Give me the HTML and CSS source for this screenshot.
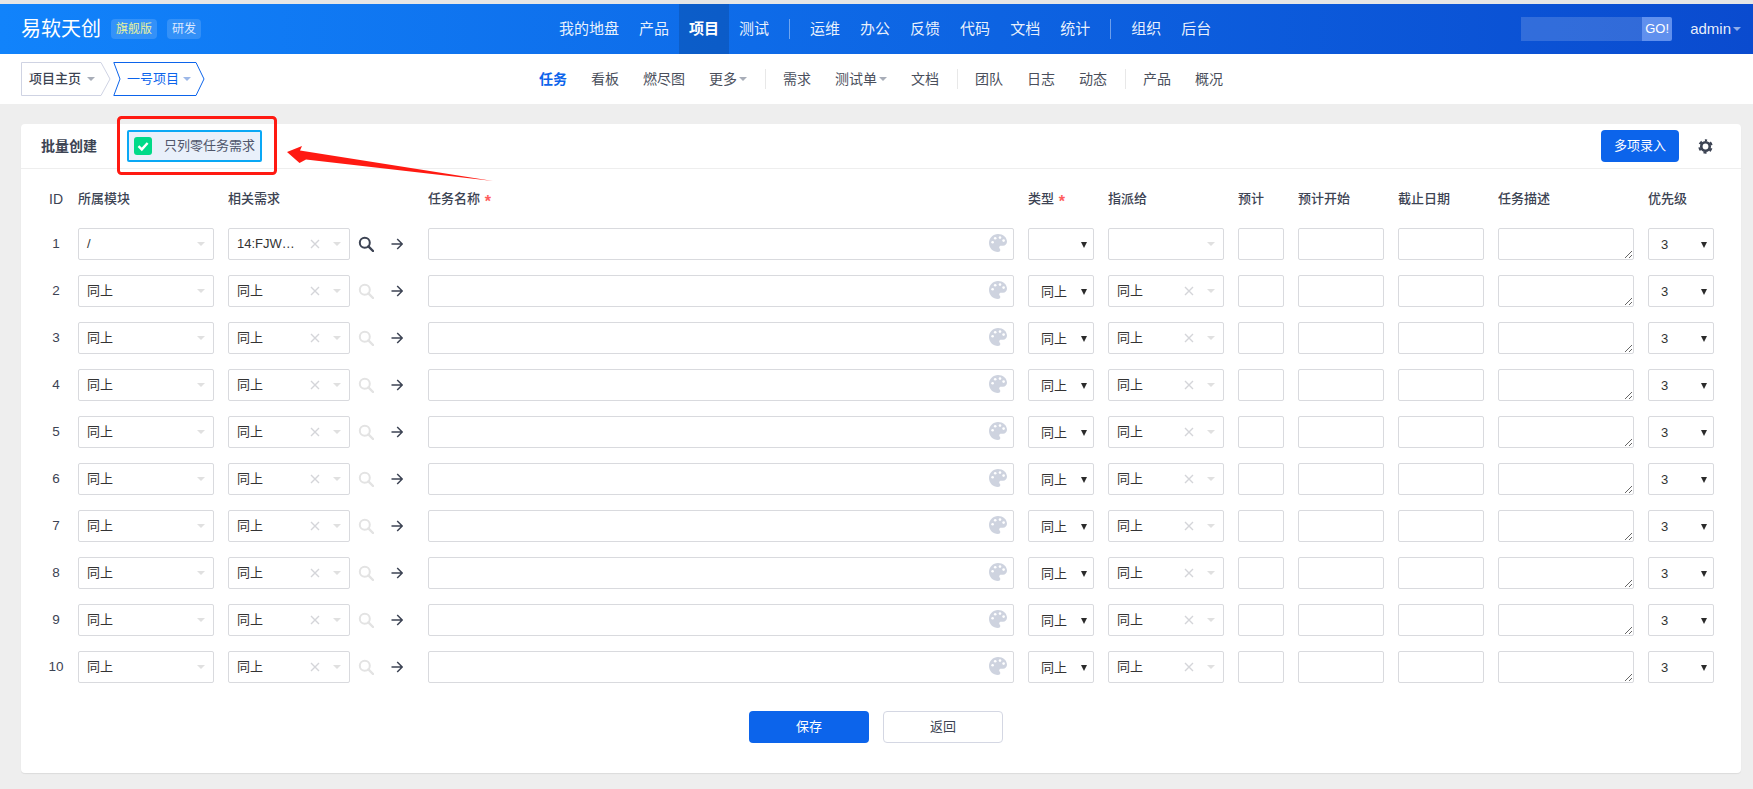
FILE: index.html
```html
<!DOCTYPE html>
<html lang="zh-CN">
<head>
<meta charset="utf-8">
<title>批量创建</title>
<link rel="stylesheet" href="styles.css">
</head>
<body>
<svg class="defs" aria-hidden="true">
  <symbol id="i-search" viewBox="0 0 16 16"><circle cx="6.8" cy="6.8" r="5" fill="none" stroke="currentColor" stroke-width="2"/><path d="M10.4 10.4L15 15" fill="none" stroke="currentColor" stroke-width="2.4" stroke-linecap="round"/></symbol>
  <symbol id="i-arrow" viewBox="0 0 12 12"><path d="M0.5 6H11M6.2 1L11.2 6L6.2 11" fill="none" stroke="currentColor" stroke-width="1.5"/></symbol>
  <symbol id="i-x" viewBox="0 0 10 10"><path d="M1 1L9 9M9 1L1 9" fill="none" stroke="currentColor" stroke-width="1.4"/></symbol>
  <symbol id="i-palette" viewBox="0 0 18 18"><path d="M9 0C4 0 0 4 0 9s4 9 9 9c1.5 0 2.3-.9 2.3-2 0-.6-.3-1-.6-1.4-.3-.4-.5-.7-.5-1.2 0-1 .8-1.7 1.8-1.7H14c2.2 0 4-1.8 4-4C18 3.4 14 0 9 0z" fill="currentColor"/><circle cx="3.6" cy="8.2" r="1.3" fill="#fff"/><circle cx="6.2" cy="4.2" r="1.3" fill="#fff"/><circle cx="11" cy="3.6" r="1.3" fill="#fff"/><circle cx="14.6" cy="6.6" r="1.3" fill="#fff"/></symbol>
</svg>
<div class="top-strip"></div>
<header class="header">
  <div class="brand">
    <span class="logo">易软天创</span>
    <span class="badge badge-edition">旗舰版</span>
    <span class="badge badge-mode">研发</span>
  </div>
  <nav class="main-nav">
    <a class="main-link">我的地盘</a>
    <a class="main-link">产品</a>
    <a class="main-link is-active">项目</a>
    <a class="main-link">测试</a>
    <span class="main-sep"></span>
    <a class="main-link">运维</a>
    <a class="main-link">办公</a>
    <a class="main-link">反馈</a>
    <a class="main-link">代码</a>
    <a class="main-link">文档</a>
    <a class="main-link">统计</a>
    <span class="main-sep"></span>
    <a class="main-link">组织</a>
    <a class="main-link">后台</a>
  </nav>
  <div class="header-right">
    <div class="search"><span class="search-field"></span><span class="search-go">GO!</span></div>
    <span class="user">admin<i class="user-caret"></i></span>
  </div>
</header>
<div class="subbar">
  <div class="crumbs">
    <div class="crumb crumb-home">
      <svg class="crumb-shape" viewBox="0 0 90 34" aria-hidden="true"><path d="M.5.5H80L89 17L80 33.5H.5Z" fill="#fff" stroke="#cfd3e3"/></svg>
      <span class="crumb-text">项目主页</span><i class="crumb-caret"></i>
    </div>
    <div class="crumb crumb-project">
      <svg class="crumb-shape" viewBox="0 0 92 34" aria-hidden="true"><path d="M.8.5H83L91 17L83 33.5H.8L7 17Z" fill="#fff" stroke="#0c64eb"/></svg>
      <span class="crumb-text">一号项目</span><i class="crumb-caret crumb-caret-blue"></i>
    </div>
  </div>
  <nav class="sub-nav">
    <a class="sub-link is-active">任务</a>
    <a class="sub-link">看板</a>
    <a class="sub-link">燃尽图</a>
    <a class="sub-link">更多<i class="sub-caret"></i></a>
    <span class="sub-sep"></span>
    <a class="sub-link">需求</a>
    <a class="sub-link">测试单<i class="sub-caret"></i></a>
    <a class="sub-link">文档</a>
    <span class="sub-sep"></span>
    <a class="sub-link">团队</a>
    <a class="sub-link">日志</a>
    <a class="sub-link">动态</a>
    <span class="sub-sep"></span>
    <a class="sub-link">产品</a>
    <a class="sub-link">概况</a>
  </nav>
</div>
<main class="page">
  <section class="card">
    <div class="card-head">
      <h2 class="card-title">批量创建</h2>
      <label class="zero-check">
        <span class="check-box"><svg viewBox="0 0 18 18" aria-hidden="true"><path d="M4.5 9.2L7.8 12.4L13.6 6" fill="none" stroke="#fff" stroke-width="2.4"/></svg></span>
        <span class="check-label">只列零任务需求</span>
      </label>
      <button class="btn btn-multi" type="button">多项录入</button>
      <svg class="gear" viewBox="0 0 16 16" aria-hidden="true"><circle cx="8" cy="8" r="4.5" fill="none" stroke="#3c4353" stroke-width="2.8"/><circle cx="8" cy="8" r="6.6" fill="none" stroke="#3c4353" stroke-width="2.2" stroke-dasharray="3.4 3.51" stroke-dashoffset="1.7" transform="rotate(-90 8 8)"/></svg>
    </div>
    <div class="table">
      <div class="grid grid-head">
        <span class="th th-id">ID</span>
        <span class="th">所属模块</span>
        <span class="th">相关需求</span>
        <span class="th">任务名称 <em class="req">*</em></span>
        <span class="th">类型 <em class="req">*</em></span>
        <span class="th">指派给</span>
        <span class="th">预计</span>
        <span class="th">预计开始</span>
        <span class="th">截止日期</span>
        <span class="th">任务描述</span>
        <span class="th">优先级</span>
      </div>
      <div class="grid">
        <span class="row-id">1</span>
        <div class="picker"><span class="picker-text">/</span><i class="picker-caret"></i></div>
        <div class="story"><div class="picker"><span class="picker-text">14:FJW…</span><svg class="clear"><use href="#i-x"/></svg><i class="picker-caret"></i></div><svg class="find"><use href="#i-search"/></svg><svg class="go"><use href="#i-arrow"/></svg></div>
        <div class="name"><input class="field" type="text"><svg class="palette"><use href="#i-palette"/></svg></div>
        <div class="native"><select class="field"><option></option></select></div>
        <div class="picker"><span class="picker-text"></span><i class="picker-caret"></i></div>
        <input class="field" type="text"><input class="field" type="text"><input class="field" type="text">
        <textarea class="field"></textarea>
        <div class="native"><select class="field"><option>3</option></select></div>
      </div>
      <div class="grid">
        <span class="row-id">2</span>
        <div class="picker"><span class="picker-text">同上</span><i class="picker-caret"></i></div>
        <div class="story"><div class="picker"><span class="picker-text">同上</span><svg class="clear"><use href="#i-x"/></svg><i class="picker-caret"></i></div><svg class="find find-off"><use href="#i-search"/></svg><svg class="go"><use href="#i-arrow"/></svg></div>
        <div class="name"><input class="field" type="text"><svg class="palette"><use href="#i-palette"/></svg></div>
        <div class="native"><select class="field"><option>同上</option></select></div>
        <div class="picker"><span class="picker-text">同上</span><svg class="clear"><use href="#i-x"/></svg><i class="picker-caret"></i></div>
        <input class="field" type="text"><input class="field" type="text"><input class="field" type="text">
        <textarea class="field"></textarea>
        <div class="native"><select class="field"><option>3</option></select></div>
      </div>
      <div class="grid">
        <span class="row-id">3</span>
        <div class="picker"><span class="picker-text">同上</span><i class="picker-caret"></i></div>
        <div class="story"><div class="picker"><span class="picker-text">同上</span><svg class="clear"><use href="#i-x"/></svg><i class="picker-caret"></i></div><svg class="find find-off"><use href="#i-search"/></svg><svg class="go"><use href="#i-arrow"/></svg></div>
        <div class="name"><input class="field" type="text"><svg class="palette"><use href="#i-palette"/></svg></div>
        <div class="native"><select class="field"><option>同上</option></select></div>
        <div class="picker"><span class="picker-text">同上</span><svg class="clear"><use href="#i-x"/></svg><i class="picker-caret"></i></div>
        <input class="field" type="text"><input class="field" type="text"><input class="field" type="text">
        <textarea class="field"></textarea>
        <div class="native"><select class="field"><option>3</option></select></div>
      </div>
      <div class="grid">
        <span class="row-id">4</span>
        <div class="picker"><span class="picker-text">同上</span><i class="picker-caret"></i></div>
        <div class="story"><div class="picker"><span class="picker-text">同上</span><svg class="clear"><use href="#i-x"/></svg><i class="picker-caret"></i></div><svg class="find find-off"><use href="#i-search"/></svg><svg class="go"><use href="#i-arrow"/></svg></div>
        <div class="name"><input class="field" type="text"><svg class="palette"><use href="#i-palette"/></svg></div>
        <div class="native"><select class="field"><option>同上</option></select></div>
        <div class="picker"><span class="picker-text">同上</span><svg class="clear"><use href="#i-x"/></svg><i class="picker-caret"></i></div>
        <input class="field" type="text"><input class="field" type="text"><input class="field" type="text">
        <textarea class="field"></textarea>
        <div class="native"><select class="field"><option>3</option></select></div>
      </div>
      <div class="grid">
        <span class="row-id">5</span>
        <div class="picker"><span class="picker-text">同上</span><i class="picker-caret"></i></div>
        <div class="story"><div class="picker"><span class="picker-text">同上</span><svg class="clear"><use href="#i-x"/></svg><i class="picker-caret"></i></div><svg class="find find-off"><use href="#i-search"/></svg><svg class="go"><use href="#i-arrow"/></svg></div>
        <div class="name"><input class="field" type="text"><svg class="palette"><use href="#i-palette"/></svg></div>
        <div class="native"><select class="field"><option>同上</option></select></div>
        <div class="picker"><span class="picker-text">同上</span><svg class="clear"><use href="#i-x"/></svg><i class="picker-caret"></i></div>
        <input class="field" type="text"><input class="field" type="text"><input class="field" type="text">
        <textarea class="field"></textarea>
        <div class="native"><select class="field"><option>3</option></select></div>
      </div>
      <div class="grid">
        <span class="row-id">6</span>
        <div class="picker"><span class="picker-text">同上</span><i class="picker-caret"></i></div>
        <div class="story"><div class="picker"><span class="picker-text">同上</span><svg class="clear"><use href="#i-x"/></svg><i class="picker-caret"></i></div><svg class="find find-off"><use href="#i-search"/></svg><svg class="go"><use href="#i-arrow"/></svg></div>
        <div class="name"><input class="field" type="text"><svg class="palette"><use href="#i-palette"/></svg></div>
        <div class="native"><select class="field"><option>同上</option></select></div>
        <div class="picker"><span class="picker-text">同上</span><svg class="clear"><use href="#i-x"/></svg><i class="picker-caret"></i></div>
        <input class="field" type="text"><input class="field" type="text"><input class="field" type="text">
        <textarea class="field"></textarea>
        <div class="native"><select class="field"><option>3</option></select></div>
      </div>
      <div class="grid">
        <span class="row-id">7</span>
        <div class="picker"><span class="picker-text">同上</span><i class="picker-caret"></i></div>
        <div class="story"><div class="picker"><span class="picker-text">同上</span><svg class="clear"><use href="#i-x"/></svg><i class="picker-caret"></i></div><svg class="find find-off"><use href="#i-search"/></svg><svg class="go"><use href="#i-arrow"/></svg></div>
        <div class="name"><input class="field" type="text"><svg class="palette"><use href="#i-palette"/></svg></div>
        <div class="native"><select class="field"><option>同上</option></select></div>
        <div class="picker"><span class="picker-text">同上</span><svg class="clear"><use href="#i-x"/></svg><i class="picker-caret"></i></div>
        <input class="field" type="text"><input class="field" type="text"><input class="field" type="text">
        <textarea class="field"></textarea>
        <div class="native"><select class="field"><option>3</option></select></div>
      </div>
      <div class="grid">
        <span class="row-id">8</span>
        <div class="picker"><span class="picker-text">同上</span><i class="picker-caret"></i></div>
        <div class="story"><div class="picker"><span class="picker-text">同上</span><svg class="clear"><use href="#i-x"/></svg><i class="picker-caret"></i></div><svg class="find find-off"><use href="#i-search"/></svg><svg class="go"><use href="#i-arrow"/></svg></div>
        <div class="name"><input class="field" type="text"><svg class="palette"><use href="#i-palette"/></svg></div>
        <div class="native"><select class="field"><option>同上</option></select></div>
        <div class="picker"><span class="picker-text">同上</span><svg class="clear"><use href="#i-x"/></svg><i class="picker-caret"></i></div>
        <input class="field" type="text"><input class="field" type="text"><input class="field" type="text">
        <textarea class="field"></textarea>
        <div class="native"><select class="field"><option>3</option></select></div>
      </div>
      <div class="grid">
        <span class="row-id">9</span>
        <div class="picker"><span class="picker-text">同上</span><i class="picker-caret"></i></div>
        <div class="story"><div class="picker"><span class="picker-text">同上</span><svg class="clear"><use href="#i-x"/></svg><i class="picker-caret"></i></div><svg class="find find-off"><use href="#i-search"/></svg><svg class="go"><use href="#i-arrow"/></svg></div>
        <div class="name"><input class="field" type="text"><svg class="palette"><use href="#i-palette"/></svg></div>
        <div class="native"><select class="field"><option>同上</option></select></div>
        <div class="picker"><span class="picker-text">同上</span><svg class="clear"><use href="#i-x"/></svg><i class="picker-caret"></i></div>
        <input class="field" type="text"><input class="field" type="text"><input class="field" type="text">
        <textarea class="field"></textarea>
        <div class="native"><select class="field"><option>3</option></select></div>
      </div>
      <div class="grid">
        <span class="row-id">10</span>
        <div class="picker"><span class="picker-text">同上</span><i class="picker-caret"></i></div>
        <div class="story"><div class="picker"><span class="picker-text">同上</span><svg class="clear"><use href="#i-x"/></svg><i class="picker-caret"></i></div><svg class="find find-off"><use href="#i-search"/></svg><svg class="go"><use href="#i-arrow"/></svg></div>
        <div class="name"><input class="field" type="text"><svg class="palette"><use href="#i-palette"/></svg></div>
        <div class="native"><select class="field"><option>同上</option></select></div>
        <div class="picker"><span class="picker-text">同上</span><svg class="clear"><use href="#i-x"/></svg><i class="picker-caret"></i></div>
        <input class="field" type="text"><input class="field" type="text"><input class="field" type="text">
        <textarea class="field"></textarea>
        <div class="native"><select class="field"><option>3</option></select></div>
      </div>
    </div>
    <div class="actions">
      <button class="btn btn-save" type="button">保存</button>
      <button class="btn btn-back" type="button">返回</button>
    </div>
  </section>
</main>
<svg class="annotation" viewBox="0 0 520 200" aria-hidden="true">
  <rect x="118.5" y="117.5" width="157" height="56" rx="3" fill="none" stroke="#ff1a12" stroke-width="3"/>
  <path d="M287 152L302 146L300 150.5L493 181L306 159.5L299.5 163Z" fill="#ff1a12"/>
</svg>
</body>
</html>
```
FILE: styles.css
```css
* { box-sizing: border-box; }
html, body { margin: 0; height: 789px; overflow: hidden; }
body {
  position: relative;
  background: #eeeeee;
  color: #3c4353;
  font: 13px/20px "Liberation Sans", "Noto Sans CJK SC", sans-serif;
}
.defs { display: none; }
.top-strip { height: 4px; background: #e6e6e6; }

/* header */
.header {
  display: grid;
  grid-template-columns: 549px auto 1fr;
  align-items: center;
  height: 50px;
  padding-right: 12px;
  background: linear-gradient(90deg, #1183fb 0%, #0a4bcf 100%);
  color: #fff;
}
.brand { display: flex; align-items: center; padding-left: 21px; }
.logo { font-size: 20px; line-height: 28px; margin-right: 10px; }
.badge {
  height: 20px;
  padding: 0 5px;
  margin-right: 10px;
  border-radius: 4px;
  background: rgba(255, 255, 255, .15);
  font-size: 12px;
  line-height: 20px;
}
.badge-edition { color: #e9f29c; }
.badge-mode { color: #dce8ff; }
.main-nav { display: flex; align-items: center; height: 50px; }
.main-link {
  height: 50px;
  padding: 0 10px;
  font-size: 15px;
  line-height: 50px;
  color: rgba(255, 255, 255, .92);
}
.main-link.is-active { background: rgba(0, 0, 0, .14); color: #fff; font-weight: 700; }
.main-sep { width: 1px; height: 20px; margin: 0 10px; background: rgba(255, 255, 255, .4); }
.header-right { display: flex; justify-content: flex-end; align-items: center; gap: 18px; }
.search { display: flex; height: 24px; }
.search-field { width: 121px; background: rgba(255, 255, 255, .16); }
.search-go {
  width: 30px;
  background: rgba(150, 185, 255, .62);
  border-radius: 0 2px 2px 0;
  font-size: 13px;
  line-height: 24px;
  text-align: center;
}
.user { display: flex; align-items: center; font-size: 15px; color: rgba(255, 255, 255, .92); }
.user-caret {
  margin-left: 2px;
  border: 4px solid transparent;
  border-top: 4px solid rgba(255, 255, 255, .55);
  border-bottom: 0;
}

/* sub bar */
.subbar {
  display: grid;
  grid-template-columns: 527px auto;
  align-items: center;
  height: 50px;
  background: #fff;
}
.crumbs { display: flex; align-items: center; padding-left: 21px; gap: 3px; }
.crumb {
  position: relative;
  display: flex;
  align-items: center;
  height: 34px;
  font-size: 13px;
}
.crumb-shape { position: absolute; left: 0; top: 0; height: 34px; }
.crumb-home { width: 89px; padding-left: 8px; color: #3c4353; font-weight: 500; }
.crumb-home .crumb-shape { width: 90px; }
.crumb-project { width: 92px; padding-left: 14px; color: #0c64eb; }
.crumb-project .crumb-shape { width: 92px; }
.crumb-text { position: relative; }
.crumb-caret {
  position: relative;
  margin-left: 6px;
  border: 4px solid transparent;
  border-top: 4px solid #a8adb8;
  border-bottom: 0;
}
.crumb-caret-blue { margin-left: 4px; border-top-color: #9db8e8; }
.sub-nav { display: flex; align-items: center; }
.sub-link {
  display: flex;
  align-items: center;
  padding: 0 12px;
  font-size: 14px;
  line-height: 20px;
  color: #4a4f5c;
  white-space: nowrap;
}
.sub-link.is-active { color: #0c64eb; font-weight: 700; }
.sub-caret {
  margin-left: 2px;
  border: 4px solid transparent;
  border-top: 4px solid #a8adb8;
  border-bottom: 0;
}
.sub-sep { width: 1px; height: 20px; margin: 0 5px 0 6px; background: #e8e8e8; }

/* card */
.page { padding: 20px 12px 0 21px; }
.card {
  padding-bottom: 30px;
  background: #fff;
  border-radius: 4px;
  box-shadow: 0 1px 1px rgba(0, 0, 0, .08);
}
.card-head {
  display: flex;
  align-items: center;
  height: 45px;
  padding: 0 28px 0 20px;
  border-bottom: 1px solid #eeeeee;
}
.card-title { margin: 0 30px 0 0; font-size: 14px; font-weight: 700; color: #3c4353; }
.zero-check {
  display: flex;
  align-items: center;
  width: 135px;
  height: 32px;
  padding-left: 5px;
  background: #e9f0fa;
  border: 2px solid #0aa8f5;
  border-radius: 2px;
}
.check-box {
  display: flex;
  width: 18px;
  height: 18px;
  background: #00da88;
  border-radius: 3px;
}
.check-box svg { width: 18px; height: 18px; }
.check-label { margin-left: 12px; font-size: 13px; white-space: nowrap; color: #50566a; }
.btn {
  width: 120px;
  height: 32px;
  padding: 0;
  border: 1px solid transparent;
  border-radius: 4px;
  font: inherit;
  cursor: pointer;
}
.btn-multi { width: 78px; margin-left: auto; background: #0c64eb; color: #fff; }
.gear { width: 15px; height: 15px; margin-left: 19px; }

/* table */
.table { display: flex; flex-direction: column; gap: 15px; padding: 20px 27px 0; }
.grid {
  display: grid;
  grid-template-columns: 16px 136px 186px 1fr 66px 116px 46px 86px 86px 136px 66px;
  column-gap: 14px;
  align-items: center;
  height: 32px;
}
.grid-head { height: 20px; margin-bottom: 4px; }
.th { font-weight: 500; color: #3c4353; white-space: nowrap; }
.th-id { display: flex; justify-content: center; font-size: 14px; font-weight: 400; }
.req {
  display: inline-block;
  margin-left: 1px;
  font-style: normal;
  font-weight: 700;
  font-size: 16px;
  line-height: 12px;
  vertical-align: -4px;
  color: #ff5d5d;
}
.row-id { color: #3c4353; font-size: 13.5px; text-align: center; white-space: nowrap; display: flex; justify-content: center; }

.field, .picker {
  width: 100%;
  height: 32px;
  background: #fff;
  border: 1px solid #d9dade;
  border-radius: 2px;
}
.field { display: block; padding: 0; margin: 0; outline: none; font: inherit; color: #3c4353; }
textarea.field { resize: both; min-width: 136px; max-width: 136px; min-height: 32px; max-height: 32px; }
.picker { display: flex; align-items: center; padding: 0 8px 0 8px; color: #3c4353; }
.picker-text { flex: 1; min-width: 0; white-space: nowrap; color: #333; }
.clear { width: 10px; height: 10px; margin-right: 13px; color: #d4d5d9; }
.picker-caret {
  flex: none;
  border: 4px solid transparent;
  border-top: 4px solid #e0e0e0;
  border-bottom: 0;
}
.story { display: flex; align-items: center; }
.story .picker { flex: none; width: 122px; }
.find { flex: none; width: 16px; height: 16px; margin-left: 8px; color: #3c4353; }
.find-off { color: #e3e3e3; }
.go { flex: none; width: 12px; height: 12px; margin-left: 17px; color: #3c4353; }
.name { position: relative; }
.palette { position: absolute; right: 7px; top: 6px; width: 18px; height: 18px; color: #ced3df; }
.native { position: relative; }
.native::after {
  content: "";
  position: absolute;
  right: 7px;
  top: 14px;
  border: 3px solid transparent;
  border-top: 6px solid #2b2b2b;
  border-bottom: 0;
  pointer-events: none;
}
.native select { appearance: none; padding: 2px 0 0 12px; color: #333; }

/* actions */
.actions { display: flex; justify-content: center; gap: 14px; margin-top: 28px; padding-right: 10px; }
.btn-save { background: #0c64eb; color: #fff; }
.btn-back { background: #fff; border-color: #d4d7e3; color: #3c4353; }

/* annotation drawn over the screenshot */
.annotation { position: absolute; left: 0; top: 0; width: 520px; height: 200px; pointer-events: none; }
```
